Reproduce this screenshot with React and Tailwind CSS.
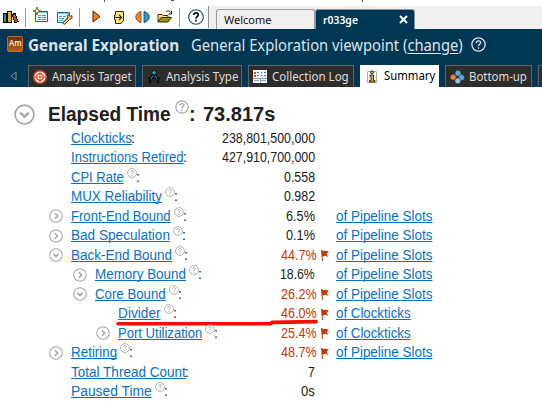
import React, { useLayoutEffect, useRef } from "react";

const ARIAL = "font-['Liberation_Sans',Arial,sans-serif]";
const SEGOE = "font-['Noto_Sans','Open_Sans',sans-serif]";

// Condenses or widens a run of text so that it occupies exactly `w` pixels.
function Fit({ w, children, className = "" }) {
  const ref = useRef(null);
  useLayoutEffect(() => {
    const fit = () => {
      const el = ref.current;
      if (el) el.style.transform = `scaleX(${w / el.offsetWidth})`;
    };
    fit();
    document.fonts?.ready.then(fit);
  }, [w]);
  return (
    <span className="inline-block shrink-0 whitespace-nowrap" style={{ width: w }}>
      <span ref={ref} className={`inline-block origin-left ${className}`}>{children}</span>
    </span>
  );
}

function Help({ className = "" }) {
  return (
    <svg viewBox="0 0 14 14" className={`shrink-0 ${className}`} fill="none" stroke="currentColor">
      <circle cx="7" cy="7" r="6.2" strokeWidth="1.2" />
      <path d="M5 5.5C5 3 9 3 9 5.3C9 6.8 7 6.6 7 8.4M7 9.6V11" strokeWidth="1.3" />
    </svg>
  );
}

function Toggle({ open, className = "" }) {
  return (
    <svg viewBox="0 0 14 14" className={`shrink-0 text-[#a6a6a6] ${className}`} fill="none" stroke="currentColor">
      <circle cx="7" cy="7" r="6.3" strokeWidth="1.1" />
      <path d={open ? "M4.2 5.8L7 8.6L9.8 5.8" : "M5.8 4.2L8.6 7L5.8 9.8"} strokeWidth="1.6" />
    </svg>
  );
}

function Flag() {
  return (
    <svg viewBox="0 0 8 11" className="ml-[5px] mt-px h-[11px] w-2 shrink-0" fill="#c23808">
      <path d="M0 0H1.2L2.2 1.2L4 .8L7.8 1.6L5.6 4L7.4 7L4.6 5.8L1.6 6.4L2 11H1Z" />
    </svg>
  );
}

const slots = ["of Pipeline Slots", 96];
const ticks = ["of Clockticks", 75];
const rows = [
  { t: "Clockticks", w: 61, v: "238,801,500,000", vw: 93 },
  { t: "Instructions Retired", w: 113, v: "427,910,700,000", vw: 93 },
  { t: "CPI Rate", w: 53, v: "0.558", vw: 31, help: true },
  { t: "MUX Reliability", w: 91, v: "0.982", vw: 31, help: true },
  { t: "Front-End Bound", w: 100, v: "6.5%", vw: 29, help: true, toggle: "closed", of: slots },
  { t: "Bad Speculation", w: 99, v: "0.1%", vw: 29, help: true, toggle: "closed", of: slots },
  { t: "Back-End Bound", w: 101, v: "44.7%", vw: 36, help: true, toggle: "open", of: slots, hot: true },
  { t: "Memory Bound", w: 91, v: "18.6%", vw: 35, help: true, toggle: "closed", of: slots, level: 1 },
  { t: "Core Bound", w: 71, v: "26.2%", vw: 36, help: true, toggle: "open", of: slots, hot: true, level: 1 },
  { t: "Divider", w: 43, v: "46.0%", vw: 36, help: true, of: ticks, hot: true, level: 2, mark: true },
  { t: "Port Utilization", w: 84, v: "25.4%", vw: 36, help: true, toggle: "closed", of: ticks, hot: true, level: 2 },
  { t: "Retiring", w: 46, v: "48.7%", vw: 36, help: true, toggle: "closed", of: slots, hot: true },
  { t: "Total Thread Count", w: 115, v: "7", vw: 7 },
  { t: "Paused Time", w: 81, v: "0s", vw: 14, help: true },
];
const indents = ["pl-[49px]", "pl-[73px]", "pl-[96px]"];
const link = "text-[#0a70c4] underline decoration-1 underline-offset-[1px] [text-decoration-skip-ink:none]";

function Row({ r }) {
  return (
    <div className="relative flex h-[19.5px] items-center text-[14px] leading-[19px] text-[#202020]">
      <div className={`flex w-[316px] items-center ${indents[r.level || 0]}`}>
        <span className="flex w-[22px] shrink-0">
          {r.toggle && <Toggle open={r.toggle === "open"} className="h-[14px] w-[14px]" />}
        </span>
        <Fit w={r.w} className={link}>{r.t}</Fit>
        {r.help && <Help className="mb-[9px] ml-[3px] h-[10px] w-[10px] text-[#a6a6a6]" />}
        <span className="-ml-px w-1">:</span>
        <span className={`ml-auto flex shrink-0 ${r.hot ? "-mr-px text-[#c23808]" : "mr-px"}`}>
          <Fit w={r.vw}>{r.v}</Fit>
        </span>
      </div>
      <div className="flex w-5 shrink-0 items-center">{r.hot && <Flag />}</div>
      {r.of && <Fit w={r.of[1]} className={link}>{r.of[0]}</Fit>}
      {r.mark && (
        <svg className="absolute left-[115px] top-[12.5px] h-3 w-[206px]" viewBox="0 0 206 12" fill="none" stroke="#ff0a00" strokeWidth="3.6" strokeLinecap="round" strokeLinejoin="round">
          <path d="M3 6.7H82L156 6.8L157 5.4L201 4.6" />
        </svg>
      )}
    </div>
  );
}

function Books() {
  return (
    <svg viewBox="0 0 17 14" className="h-[14px] w-[17px]" shapeRendering="crispEdges">
      <path d="M1.5 3.5h3v9H1.5z" fill="#159b9b" stroke="#000" />
      <path d="M5.5 1.5h4v11H5.5z" fill="#f0b02c" stroke="#000" />
      <path d="M10 4.5l3-1l3 8l-3 1.5z" fill="#d14a15" stroke="#000" />
    </svg>
  );
}

function NewProject() {
  return (
    <svg viewBox="0 0 16 16" className="h-4 w-4">
      <path d="M3.5 4.5H14.5V14.5H2.5V5" fill="#eafaff" stroke="#126b91" />
      <path d="M5 5.5H14" stroke="#7cc4de" strokeWidth="1" />
      <path d="M5 8.5h3m1 0h4M5 10.5h3m1 0h4M5 12.5h3m1 0h4" stroke="#3aa4c8" />
      <path d="M4 0L5 3L8 4L5 5L4 8L3 5L0 4L3 3Z" fill="#fff0a0" stroke="#6b5010" strokeWidth=".8" />
    </svg>
  );
}

function EditProject() {
  return (
    <svg viewBox="0 0 17 15" className="h-[15px] w-[17px]">
      <path d="M1.5 2.5H13.5V5L8 12.5H1.5Z" fill="#eafaff" stroke="#126b91" />
      <path d="M2 3.5H13" stroke="#7cc4de" />
      <path d="M3 6.5h3m1 0h3M3 8.5h5M3 10.5h4" stroke="#3aa4c8" />
      <path d="M6.5 13L12 8L11 5.5L13 4.5L14 6.5L16 5.5L16 8.5L13.5 9.5L8.5 14.5Z" fill="#f1c078" stroke="#493412" strokeWidth=".9" />
    </svg>
  );
}

function Toolbar() {
  const sep = <span className="h-[19px] w-px bg-[#9a9a9a]" />;
  return (
    <div className="flex h-[22px] w-[209px] shrink-0 items-center border-r border-[#8d8d8d] bg-white pl-[2px]">
      <Books />
      <span className="ml-[6px] flex">{sep}</span>
      <span className="ml-[7px] mb-1"><NewProject /></span>
      <span className="ml-[7px]"><EditProject /></span>
      <span className="ml-[6px] flex">{sep}</span>
      <svg viewBox="0 0 9 13" className="ml-3 mb-px h-[13px] w-[9px]"><path d="M1 1L8 6.5L1 12Z" fill="#f28020" stroke="#402008" /></svg>
      <svg viewBox="0 0 11 13" className="ml-[13px] h-[13px] w-[11px]">
        <path d="M1.5 .5H9.5V9.5L7 12.5H1.5V9H.5V4H1.5Z" fill="#ffdf77" stroke="#302408" />
        <path d="M1 6.5H7M5 3.8L7.6 6.5L5 9.2" fill="none" stroke="#302408" strokeWidth="1.2" />
      </svg>
      <svg viewBox="0 0 15 12" className="ml-[10px] h-3 w-[15px]">
        <path d="M6 .5V11.5C-1 10 -1 2 6 .5Z" fill="#f28030" stroke="#803812" strokeWidth=".8" />
        <path d="M9 .5V11.5C16 10 16 2 9 .5Z" fill="#259bd3" stroke="#10364e" strokeWidth=".8" />
      </svg>
      <svg viewBox="0 0 16 13" className="ml-[7px] mb-px h-[13px] w-4">
        <path d="M1 12V4.5H5L6 5.5H11V8" fill="#ffe36d" stroke="#302c08" />
        <path d="M1 12L4 7.5H14.5L11 12Z" fill="#9b9518" stroke="#302c08" />
        <path d="M9 2C11 0 13 1 14 3M14.5 1V4H11.5" fill="none" stroke="#111" />
      </svg>
      <span className="ml-[6px] flex">{sep}</span>
      <svg viewBox="0 0 16 16" className="ml-2 h-4 w-4 shrink-0" fill="none">
        <circle cx="8" cy="8" r="7.3" fill="#fff" stroke="#174b68" strokeWidth="1.1" />
        <path d="M5.7 6C5.7 3 10.5 3.2 10.3 6C10.2 7.5 8 7.5 8 9.5M8 10.8V12.5" stroke="#111" strokeWidth="1.8" />
      </svg>
    </div>
  );
}

function NavTab({ width, tw, label, active, children, className = "" }) {
  return (
    <div className={`flex h-[22px] shrink-0 items-center text-[12px] ${width} ${active ? "bg-white text-black" : "border border-b-0 border-[#626262] bg-[#2d2d2d] text-[#dddddd]"} ${className}`}>
      {children}
      {label && <Fit w={tw}>{label}</Fit>}
    </div>
  );
}

export default function App() {
  return (
    <div className={`h-[415px] w-[542px] overflow-hidden bg-white ${ARIAL}`}>
      <div className="flex h-[6px] items-start bg-white">
        <span className="ml-[104px] h-[2px] w-px bg-[#70407a]" />
        <span className="ml-[66px] h-px w-[3px] bg-[#70407a]" />
        <span className="ml-[188px] h-[2px] w-px bg-[#70407a]" />
      </div>
      <div className={`flex h-[23px] bg-[#f0f0f0] ${SEGOE}`}>
        <Toolbar />
        <div className="ml-[7px] mt-[3px] flex h-5 w-[99px] items-center rounded-t-[3px] border border-b-0 border-[#9b9b9b] bg-[#f0f0f0] pl-[7px] pt-px text-[11px] text-[#111]">
          <Fit w={47}>Welcome</Fit>
        </div>
        <div className="mt-[3px] flex h-5 w-[100px] items-center rounded-t-[3px] border border-b-0 border-[#8b989f] bg-[#003755] pl-[7px] pt-px text-[11px] font-semibold text-white">
          <Fit w={35}>r033ge</Fit>
          <svg viewBox="0 0 9 9" className="mb-[2px] ml-[41px] h-[9px] w-[9px]" stroke="#fff" strokeWidth="2"><path d="M1 1L8 8M8 1L1 8" /></svg>
        </div>
      </div>
      <header className={`h-[58px] bg-[#003755] text-[#dce2e6] ${SEGOE}`}>
        <div className="flex h-[33px] items-center pl-[7px]">
          <div className="mb-[3px] flex h-4 w-4 items-center justify-center rounded-[2px] border border-[#c66b20] bg-linear-to-b from-[#6e2e08] to-[#b8601c] pb-[3px] text-[9px] font-semibold leading-none text-[#ffe0b8]">
            <Fit w={13}>Am</Fit>
          </div>
          <span className="ml-[5px] flex text-[15.5px] font-bold"><Fit w={151}>General Exploration</Fit></span>
          <span className="ml-[12px] flex text-[15.5px]">
            <Fit w={272}>General Exploration viewpoint (<span className="underline underline-offset-2">change</span>)</Fit>
          </span>
          <Help className="mb-[3px] ml-2 h-[15px] w-[15px]" />
        </div>
        <div className="mt-[3px] flex">
          <svg viewBox="0 0 7 10" className="ml-[10px] mt-[6px] h-[10px] w-[7px] shrink-0" fill="none" stroke="#7c929e"><path d="M6 1V9L1 5Z" /></svg>
          <NavTab width="w-[108px]" tw={80} label="Analysis Target" className="ml-[11px]">
            <svg viewBox="0 0 14 14" className="ml-1 mr-[5px] h-[14px] w-[14px] shrink-0" stroke="#d84822" fill="#fff">
              <circle cx="7" cy="7" r="6.2" strokeWidth="1.4" /><circle cx="7" cy="7" r="3.3" strokeWidth="1.2" /><path d="M7 0V14M0 7H14" />
            </svg>
          </NavTab>
          <NavTab width="w-[100px]" tw={72} label="Analysis Type" className="ml-[6px]">
            <svg viewBox="0 0 14 16" className="ml-1 mr-[5px] h-[15px] w-[14px] shrink-0" fill="none" stroke="#0a0a0a" strokeWidth="2">
              <path d="M6 5L2 15M8 5L12 15M1 10H13" /><circle cx="7" cy="4" r="2.3" fill="#31a5dc" strokeWidth="1" /><path d="M5.5 7L4 11M8.5 7L10 11" stroke="#2d8dc0" strokeWidth="1" />
            </svg>
          </NavTab>
          <NavTab width="w-[106px]" tw={77} label="Collection Log" className="ml-[6px]">
            <svg viewBox="0 0 14 13" className="ml-1 mr-[5px] h-[13px] w-[14px] shrink-0" shapeRendering="crispEdges">
              <path d="M0 0H14V13H0Z" fill="#f4f4f4" /><path d="M1 2.5H3M1 5.5H3" stroke="#d64b24" strokeWidth="2" /><path d="M4 2.5H6M8 2.5H9M11 2.5H13M4 5.5H6M8 5.5H9M11 5.5H13" stroke="#317c9e" /><path d="M0 8H14M7 8V13M1 10.5H6M8 10.5H13" stroke="#8ca6b0" />
            </svg>
          </NavTab>
          <NavTab width="w-[79px]" tw={51} label="Summary" active className="ml-[6px]">
            <svg viewBox="0 0 10 13" className="ml-[7px] mr-[7px] h-[13px] w-[10px] shrink-0">
              <path d="M.5 1.5H9.5V12.5H.5Z" fill="#fff" stroke="#aaa" /><path d="M3 5H6.5V10.5H8V12H2.5V10.5H4V6.5H3Z" fill="#f59c28" stroke="#111" strokeWidth=".8" /><circle cx="5" cy="2.3" r="1.5" fill="#f59c28" stroke="#111" strokeWidth=".8" />
            </svg>
          </NavTab>
          <NavTab width="w-[87px]" tw={58} label="Bottom-up" className="ml-[6px]">
            <svg viewBox="0 0 15 14" className="ml-1 mr-[4px] h-[14px] w-[15px] shrink-0" stroke="#152b38" strokeWidth=".5">
              <circle cx="8" cy="3.3" r="3" fill="#58acd8" /><circle cx="3.2" cy="7.2" r="3" fill="#f28032" /><circle cx="11.5" cy="7.5" r="3" fill="#58acd8" /><circle cx="7.8" cy="10.8" r="2.9" fill="#91c8df" />
            </svg>
          </NavTab>
          <NavTab width="w-5" className="ml-[6px]"><span className="ml-[3px] h-[6px] w-[6px] rounded-full bg-black" /></NavTab>
        </div>
      </header>
      <main>
        <div className="flex h-[41.5px] items-center pl-[14px] pt-[13px] text-[20px] font-bold leading-6 text-[#202020]">
          <Toggle open className="h-[21px] w-[21px]" />
          <span className="ml-[13px] flex"><Fit w={123}>Elapsed Time</Fit></span>
          <Help className="mb-[14px] ml-1 h-[14px] w-[14px] text-[#a6a6a6]" />
          <span className="w-[14px]">:</span>
          <Fit w={72}>73.817s</Fit>
        </div>
        <div>{rows.map((r) => <Row key={r.t} r={r} />)}</div>
      </main>
    </div>
  );
}
